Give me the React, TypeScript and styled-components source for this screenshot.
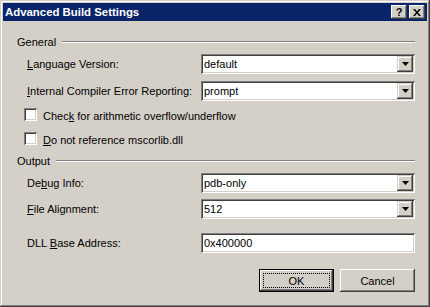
import React from "react";
import styled, { createGlobalStyle } from "styled-components";

const Global = createGlobalStyle`
  html, body { margin: 0; padding: 0; background: #d4d0c8; }
  body { font-family: "Liberation Sans", Arial, sans-serif; font-size: 11px; color: #000; }
`;

const Window = styled.div`
  box-sizing: border-box;
  width: 430px;
  height: 307px;
  background: #d4d0c8;
  padding: 3px;
  display: flex;
  flex-direction: column;
  box-shadow: inset -1px -1px #404040, inset 1px 1px #d4d0c8,
    inset -2px -2px #808080, inset 2px 2px #ffffff;
`;

const TitleBar = styled.div`
  height: 18px;
  background: #0a246a;
  display: flex;
  align-items: center;
  padding: 0 2px 0 2px;
`;

const Title = styled.div`
  flex: 1;
  color: #fff;
  font-weight: bold;
  font-size: 11.4px;
  padding-left: 0;
`;

const CapButton = styled.div<{ $gap?: number }>`
  width: 16px;
  height: 14px;
  box-sizing: border-box;
  background: #d4d0c8;
  margin-left: ${(p) => p.$gap ?? 0}px;
  box-shadow: inset -1px -1px #404040, inset 1px 1px #ffffff,
    inset -2px -2px #808080;
  display: flex;
  align-items: center;
  justify-content: center;
  font-weight: bold;
  font-size: 11px;
  line-height: 1;
`;

const Body = styled.div`
  flex: 1;
  display: flex;
  flex-direction: column;
  padding: 14px 12px 0 14px;
`;

const GroupHeader = styled.div<{ $mt: number }>`
  margin-top: ${(p) => p.$mt}px;
  height: 13px;
  display: flex;
  align-items: center;
  gap: 6px;
`;

const GroupLine = styled.div`
  flex: 1;
  height: 0;
  border-top: 1px solid #808080;
  border-bottom: 1px solid #ffffff;
`;

const Row = styled.div<{ $mt: number }>`
  margin-top: ${(p) => p.$mt}px;
  height: 20px;
  display: flex;
  align-items: center;
  padding-left: 10px;
`;

const Label = styled.div`
  width: 174px;
  white-space: nowrap;
`;

const Field = styled.div`
  box-sizing: border-box;
  width: 214px;
  height: 20px;
  background: #fff;
  display: flex;
  align-items: center;
  padding: 2px 2px 2px 3px;
  box-shadow: inset 1px 1px #808080, inset -1px -1px #ffffff,
    inset 2px 2px #404040, inset -2px -2px #d4d0c8;
`;

const FieldText = styled.div`
  flex: 1;
  white-space: nowrap;
`;

const DropButton = styled.div`
  width: 16px;
  height: 16px;
  box-sizing: border-box;
  background: #d4d0c8;
  box-shadow: inset -1px -1px #404040, inset 1px 1px #d4d0c8,
    inset -2px -2px #808080, inset 2px 2px #ffffff;
  display: flex;
  align-items: center;
  justify-content: center;
`;

const CheckRow = styled.div<{ $mt: number }>`
  margin-top: ${(p) => p.$mt}px;
  height: 13px;
  display: flex;
  align-items: center;
  gap: 6px;
  padding-left: 7px;
`;

const CheckBox = styled.div`
  width: 13px;
  height: 13px;
  box-sizing: border-box;
  background: #fff;
  box-shadow: inset 1px 1px #808080, inset -1px -1px #ffffff,
    inset 2px 2px #404040, inset -2px -2px #d4d0c8;
`;

const CheckText = styled.div`
  white-space: nowrap;
  transform: translateY(1px);
`;

const ButtonRow = styled.div`
  margin-top: 16px;
  display: flex;
  justify-content: flex-end;
  gap: 6px;
`;

const Button = styled.div<{ $default?: boolean }>`
  box-sizing: border-box;
  width: 75px;
  height: 23px;
  background: #d4d0c8;
  display: flex;
  align-items: center;
  justify-content: center;
  position: relative;
  ${(p) =>
    p.$default
      ? `border: 1px solid #000;
         box-shadow: inset -1px -1px #404040, inset 1px 1px #ffffff, inset -2px -2px #808080;`
      : `box-shadow: inset -1px -1px #404040, inset 1px 1px #ffffff, inset -2px -2px #808080, inset 2px 2px #d4d0c8;`}
`;

const FocusRect = styled.div`
  position: absolute;
  inset: 3px;
  border: 1px dotted #000;
`;

const U = styled.span`
  text-decoration: underline;
`;

const Arrow = () => (
  <svg width="7" height="4" viewBox="0 0 7 4">
    <path d="M0 0h7L3.5 4z" fill="#000" />
  </svg>
);

const Combo = ({ value }: { value: string }) => (
  <Field>
    <FieldText>{value}</FieldText>
    <DropButton>
      <Arrow />
    </DropButton>
  </Field>
);

export default function App() {
  return (
    <>
      <Global />
      <Window>
        <TitleBar>
          <Title>Advanced Build Settings</Title>
          <CapButton>?</CapButton>
          <CapButton $gap={2}>
            <svg width="8" height="7" viewBox="0 0 8 7">
              <path d="M0 0h2l2 2.5L6 0h2L5 3.5 8 7H6L4 4.5 2 7H0l3-3.5z" fill="#000" />
            </svg>
          </CapButton>
        </TitleBar>
        <Body>
          <GroupHeader $mt={0}>
            <span>General</span>
            <GroupLine />
          </GroupHeader>
          <Row $mt={6}>
            <Label>
              <U>L</U>anguage Version:
            </Label>
            <Combo value="default" />
          </Row>
          <Row $mt={7}>
            <Label>
              <U>I</U>nternal Compiler Error Reporting:
            </Label>
            <Combo value="prompt" />
          </Row>
          <CheckRow $mt={7}>
            <CheckBox />
            <CheckText>
              Chec<U>k</U> for arithmetic overflow/underflow
            </CheckText>
          </CheckRow>
          <CheckRow $mt={11}>
            <CheckBox />
            <CheckText>
              <U>D</U>o not reference mscorlib.dll
            </CheckText>
          </CheckRow>
          <GroupHeader $mt={9}>
            <span>Output</span>
            <GroupLine />
          </GroupHeader>
          <Row $mt={6}>
            <Label>
              De<U>b</U>ug Info:
            </Label>
            <Combo value="pdb-only" />
          </Row>
          <Row $mt={6}>
            <Label>
              <U>F</U>ile Alignment:
            </Label>
            <Combo value="512" />
          </Row>
          <Row $mt={14}>
            <Label>
              DLL <U>B</U>ase Address:
            </Label>
            <Field>
              <FieldText>0x400000</FieldText>
            </Field>
          </Row>
          <ButtonRow>
            <Button $default>
              OK
              <FocusRect />
            </Button>
            <Button>Cancel</Button>
          </ButtonRow>
        </Body>
      </Window>
    </>
  );
}
